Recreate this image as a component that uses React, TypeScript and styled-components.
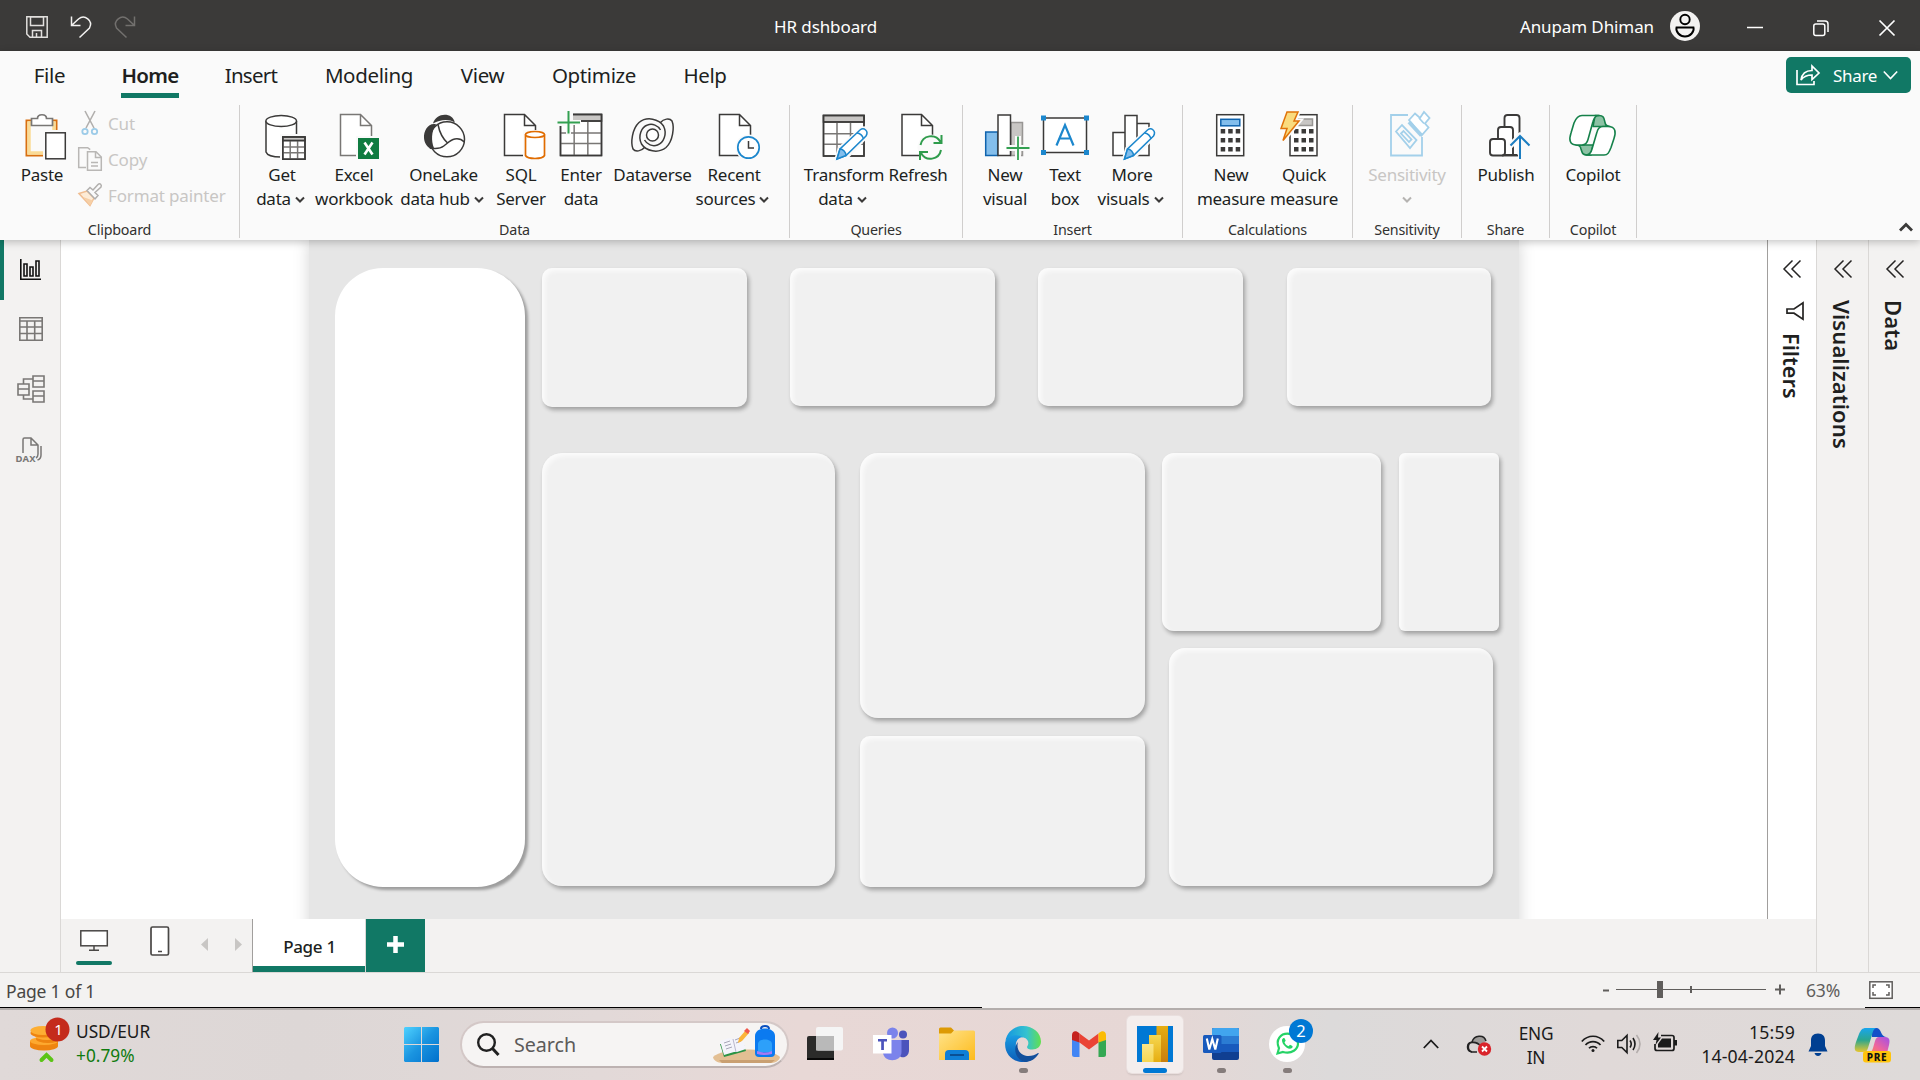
import React from "react";
import styled, { createGlobalStyle } from "styled-components";

const GREEN = "#117865";
const INK = "#3b3a39";

const Global = createGlobalStyle`
  * { box-sizing: border-box; }
  body { margin: 0; background: #f3f2f1; overflow: hidden; }
  svg { display: block; flex: none; overflow: visible; }
`;

const Screen = styled.div`
  width: 1920px; height: 1080px; display: flex; flex-direction: column;
  font-family: "Noto Sans", "Open Sans", sans-serif; color: #201f1e; overflow: hidden;
`;

/* ---------- title bar ---------- */
const TitleBar = styled.header`
  height: 51px; flex: none; background: #3b3a39; color: #fff; display: grid;
  grid-template-columns: 774px 1fr auto; align-items: center; font-size: 17px; letter-spacing: -0.1px;
`;
const QuickTools = styled.div`display: flex; align-items: center; gap: 22px; padding: 3px 0 0 26px;`;
const TitleText = styled.div`padding-top: 1px;`;
const Account = styled.div`display: flex; align-items: center; gap: 16px; padding-top: 1px;`;
const Controls = styled.div`display: flex; gap: 50px; padding: 4px 25px 0 31px;`;

/* ---------- ribbon ---------- */
const Ribbon = styled.div`
  height: 189px; flex: none; background: #fafafa; position: relative; z-index: 2;
  box-shadow: 0 2px 8px rgba(0,0,0,.24);
`;
const TabRow = styled.nav`display: flex; height: 54px; align-items: stretch;`;
const Tab = styled.div<{ $w: number; $on?: boolean; $track?: number }>`
  width: ${p => p.$w}px; display: flex; justify-content: center; font-size: 20.5px; letter-spacing: ${p => p.$track ?? -0.35}px;
  line-height: 49px; font-weight: ${p => (p.$on ? 600 : 400)};
  span { height: 47px; border-bottom: 5px solid ${p => (p.$on ? GREEN : "transparent")}; padding: 0 1px; }
`;
const ShareButton = styled.button`
  margin: 6px 9px 0 auto; width: 125px; height: 36px; border: 0; border-radius: 5px; background: ${GREEN}; color: #fff;
  display: flex; align-items: center; font: inherit; font-size: 17px; letter-spacing: -0.3px; padding: 0 11px 0 10px; gap: 6px;
  span { margin-left: 7px; }
`;
const Groups = styled.div`display: flex; height: 133px; position: relative;`;
const Group = styled.section<{ $w: number; $pad: number }>`
  width: ${p => p.$w}px; border-right: 1px solid #d0cecd; display: flex; flex-direction: column; justify-content: space-between;
  > div { display: flex; padding: 6px 0 0 ${p => p.$pad}px; }
`;
const GroupName = styled.footer`text-align: center; font-size: 14.3px; line-height: 16px; letter-spacing: -0.2px; color: #323130; white-space: nowrap;`;
const BigButton = styled.div<{ $w: number; $off?: boolean }>`
  width: ${p => p.$w}px; display: flex; flex-direction: column; align-items: center; flex: none;
  font-size: 17px; line-height: 24px; letter-spacing: -0.25px; white-space: nowrap; color: ${p => (p.$off ? "#c8c6c4" : "#201f1e")};
  > svg { margin-bottom: 2px; }
`;
const Line = styled.div<{ $menu?: boolean }>`display: flex; align-items: center; gap: 4px; height: 24px; justify-content: center; padding-right: ${p => (p.$menu ? 3 : 0)}px;`;
const SmallList = styled.div`display: flex; flex-direction: column; padding-left: 6px; margin-top: -6px;`;
const SmallItem = styled.div`
  display: flex; align-items: center; gap: 6px; height: 36px; font-size: 17px; letter-spacing: -0.15px; color: #c8c6c4; white-space: nowrap;
`;
const Collapse = styled.div`margin-left: auto; align-self: flex-end; padding: 0 7px 6px 0;`;

/* ---------- work area ---------- */
const Work = styled.main`flex: none; height: 733px; display: flex; background: #f3f2f1; border-bottom: 1px solid #dad8d6;`;
const Rail = styled.aside`width: 61px; border-right: 1px solid #dad8d6; display: flex; flex-direction: column;`;
const RailItem = styled.div<{ $on?: boolean; $dx?: number }>`
  height: 60px; display: flex; align-items: center; justify-content: center; border-left: 4px solid ${p => (p.$on ? GREEN : "transparent")};
  padding: 0 ${p => 4 - (p.$dx ?? 0) * 2}px 2px 0;
`;
const Center = styled.div`width: 1755px; display: flex; flex-direction: column;`;
const View = styled.div`height: 679px; display: flex; background: #fff; overflow: hidden;`;
const Stage = styled.div`flex: 1; padding-left: 248px; overflow: hidden;`;
const Page = styled.div`
  width: 1210px; height: 700px; background: #e6e6e6; box-shadow: 0 0 15px rgba(0,0,0,.17);
  display: flex; gap: 17px; padding: 28px 0 0 26px;
`;
const SidePanel = styled.div`
  width: 190px; height: 619px; border-radius: 48px; background: #fff; box-shadow: 3px 3px 3px rgba(0,0,0,.32);
`;
const Card = styled.div<{ $w: number; $h: number; $r: number; $ml?: number }>`
  width: ${p => p.$w}px; height: ${p => p.$h}px; border-radius: ${p => p.$r}px; margin-left: ${p => p.$ml ?? 0}px; flex: none;
  background: #f1f1f1; box-shadow: 2px 3px 4px rgba(0,0,0,.3), inset 3px 3px 5px rgba(255,255,255,.75);
`;
const Board = styled.div`display: flex; flex-direction: column;`;
const Row = styled.div<{ $gap: number }>`display: flex; gap: ${p => p.$gap}px;`;
const Stack = styled.div<{ $gap: number; $mr?: number }>`display: flex; flex-direction: column; gap: ${p => p.$gap}px; margin-right: ${p => p.$mr ?? 0}px;`;
const Lower = styled.div`display: flex; margin-top: 46px;`;

const Pane = styled.div<{ $w: number; $white?: boolean }>`
  width: ${p => p.$w}px; flex: none; border-left: 1px solid ${p => (p.$white ? "#a19f9d" : "#dad8d6")};
  background: ${p => (p.$white ? "#fff" : "#f3f2f1")}; display: flex; flex-direction: column; align-items: center; padding-top: 20px;
`;
const PaneName = styled.div<{ $size?: number }>`
  writing-mode: vertical-rl; font-size: ${p => p.$size ?? 22}px; font-weight: 600; line-height: 28px; margin: 22px 2px 0 0; letter-spacing: 0.1px;
`;
const FilterMark = styled.div`margin: 24px 0 -9px 5px;`;

const PageBar = styled.div`height: 53px; display: flex; align-items: stretch;`;
const ViewIcons = styled.div`display: flex; width: 191px; padding: 7px 0 0 15px;`;
const ViewIcon = styled.div<{ $on?: boolean; $ml?: number }>`
  width: 36px; height: 39px; margin-left: ${p => p.$ml ?? 0}px; display: flex; flex-direction: column; align-items: center; justify-content: space-between; flex: none;
  &::after { content: ""; display: ${p => (p.$on ? "block" : "none")}; width: 36px; height: 4px; border-radius: 2px; background: ${GREEN}; }
`;
const Arrows = styled.div`display: flex; gap: 27px; padding: 12px 0 0 23px;`;
const PageTab = styled.div`
  width: 114px; background: #fff; border-left: 1px solid #a19f9d; box-shadow: inset 0 -6px ${GREEN};
  text-align: center; font-weight: 500; font-size: 17px; line-height: 55px; letter-spacing: -0.3px; border-right: 1px solid #dad8d6; padding-left: 1px;
`;
const AddTab = styled.div`width: 59px; background: ${GREEN}; display: flex; justify-content: center; padding-top: 17px;`;

/* ---------- status bar ---------- */
const Status = styled.div`height: 34px; flex: none; display: flex; align-items: center; padding: 2px 27px 0 6px; font-size: 17.5px; letter-spacing: -0.2px; color: #484644;`;
const ZoomBox = styled.div`margin-left: auto; display: flex; align-items: center; color: #605e5c;`;
const Percent = styled.span`margin: -3px 29px 0 21px; font-size: 17.5px; letter-spacing: -0.2px;`;
const Edge = styled.div`
  height: 3px; flex: none; background: linear-gradient(90deg, #000 982px, #f3f2f1 982px, #f3f2f1 1865px, #000 1865px) top/100% 1px no-repeat, #b3aeac;
`;

/* ---------- task bar ---------- */
const TaskBar = styled.footer`
  height: 70px; flex: none; display: flex; position: relative; color: #1b1b1b;
  background: linear-gradient(90deg, #e0d9d8 0, #ddd7d6 300px, #e2d9d8 600px, #e8d8d6 800px, #e6d7d5 1150px, #dcdada 1330px, #e0d9d8 1600px, #dedad9 1920px);
`;
const Rates = styled.div`
  width: 404px; display: flex; padding: 9px 0 0 27px; gap: 12px; font-size: 17.3px; line-height: 24px; letter-spacing: 0;
  > div { padding-top: 1px; }
  em { font-style: normal; color: #0f7b0f; display: block; }
`;
const StartButton = styled.div`padding-top: 17px;`;
const Search = styled.div`
  width: 329px; height: 47px; margin: 11px 3px 0 21px; border-radius: 24px; background: #f6f4f3; border: 2px solid #d4c8c7; border-bottom-color: #bdb2b1;
  display: flex; align-items: center; padding-left: 15px; font-size: 19.7px; letter-spacing: -0.05px; color: #5c5a59;
  span { margin: 0 auto 0 15px; }
`;
const Pinned = styled.div`display: flex; width: 528px;`;
const PinnedApp = styled.div<{ $on?: boolean }>`
  width: 66px; height: 57px; padding: 0 5px; margin-top: 6px;
  > div { height: 57px; width: 56px; border-radius: 5px; display: flex; justify-content: center; align-items: center; flex-direction: column; position: relative; padding-bottom: 1px;
    ${p => p.$on && "background:#f4eeed; box-shadow: 0 0 0 1px #e9dfde, 0 2px 2px rgba(0,0,0,.12);"} }
`;
const Running = styled.i<{ $on?: boolean }>`
  position: absolute; bottom: 0; width: ${p => (p.$on ? 24 : 9)}px; height: 5px; border-radius: 3px; background: ${p => (p.$on ? "#0078d4" : "#857c7b")};
`;
const Tray = styled.div`margin-left: auto; display: flex; align-items: flex-start; width: 497px; font-size: 17.3px; line-height: 24px; letter-spacing: -0.1px;`;
const TrayItem = styled.div<{ $w: number; $top: number; $align?: string; $pl?: number }>`width: ${p => p.$w}px; padding: ${p => p.$top}px 0 0 ${p => p.$pl ?? 0}px; text-align: ${p => p.$align ?? "left"}; flex: none; white-space: nowrap;`;
const Lang = styled.div`margin: 0 -3px 0 -5px; letter-spacing: -0.2px;`;
const Clock = styled.div`margin-left: -14px; font-size: 17.7px; letter-spacing: 0.15px;`;

/* ---------- drawings ---------- */
const Ico = ({ children, w = 48, h = 50, box }: { children: React.ReactNode; w?: number; h?: number; box?: string }) => (
  <svg width={w} height={h} viewBox={box ?? `0 0 ${w} ${h}`} fill="none" stroke={INK} strokeWidth="1.5">{children}</svg>
);
const Chevron = ({ c = INK }: { c?: string }) => (
  <Ico w={10} h={8}><path d="M1 2.500l4 4 4-4" stroke={c} strokeWidth="2" /></Ico>
);
const Doc = ({ x, c = INK, w = 31 }: { x: number; c?: string; w?: number }) => (
  <g stroke={c} fill="#fff">
    <path stroke="none" d={`M${x} 3.5h${w - 11}l11 11v30h-${w}z`} />
    <path d={`M${x + w} 27V14.5l-11-11H${x}v41h21M${x + w - 11} 3.5v11h11`} fill="none" />
  </g>
);
const Pencil = ({ x = 0 }: { x?: number }) => (
  <g transform={`translate(${x} 0)`}>
    <path d="M17 48l3-10 21-19c4-3 9 1 6 5L27 45z" stroke="#fafafa" strokeWidth="5" fill="#fafafa" />
    <path d="M17 48l3-10 20-19c4-3 9 1 6 6L26 44.5z" fill="#fff" stroke="#1c87cd" />
    <path d="M17 48l3-10c3 0 6 3 6 6.5z" fill="#83beec" stroke="#1c87cd" />
    <path d="M37 22c3 0 6 3 6.500 6" stroke="#1c87cd" />
  </g>
);
const Grid = ({ x, y, s, head = "#c8c6c4" }: { x: number; y: number; s: number; head?: string }) => (
  <g>
    <rect x={x} y={y} width={s} height={s} fill="#fff" />
    <rect x={x} y={y} width={s} height={s * 0.16} fill={head} />
    <path stroke="#797775" d={`M${x + s / 3} ${y + s * .16}v${s * .84}M${x + s * 2 / 3} ${y + s * .16}v${s * .84}M${x} ${y + s * .45}h${s}M${x} ${y + s * .71}h${s}`} />
    <rect x={x} y={y} width={s} height={s} /><path d={`M${x} ${y + s * .16}h${s}`} />
  </g>
);
const Calc = ({ x }: { x: number }) => (
  <g>
    <rect x={x} y="3.7" width="27" height="41" fill="#fff" stroke={INK} />
    {[18, 27, 36].map(y => [0, 7.5, 15].map(d => <rect key={y + "-" + d} x={x + 4 + d} y={y} width="4.500" height="4.500" fill={INK} stroke="none" />))}
  </g>
);
const Swirl = () => (
  <path d="M15.500 36.500c-3 3.500-9 5-11.500 1.500C1.500 32 3 18 10 11.500 18 5 30 8 34.500 15c4 8 0 17-6 19-5 1.800-10.500-.5-13-5" />
);

const icons: Record<string, React.ReactNode> = {
  paste: <Ico>
    <path d="M8.500 9.500h30v35h-30z" fill="#fff" stroke="#d86f10" strokeWidth="2" />
    <path d="M11 12h25v30H11z" stroke="#fadb96" strokeWidth="3.500" fill="#fafafa" />
    <path d="M13.500 14.500v-7h6c0-5 9-5 9 0h6v7z" fill="#fff" stroke="#797775" strokeWidth="1.700" />
    <path d="M25 19h26v32H25z" fill="#fafafa" stroke="none" /><rect x="27.800" y="21.800" width="19.500" height="26" fill="#fff" />
  </Ico>,
  get: <Ico>
    <path d="M8 10v31c2 3 8 5 16 5V24h14.500V10z" fill="#fff" stroke="none" />
    <path d="M8 10v31c1 3 7 5 15 5M38.500 10v13" /><ellipse cx="23.200" cy="10" rx="15.300" ry="5.500" fill="#fff" />
    <path d="M22 23h28v28H22z" fill="#fafafa" stroke="none" /><Grid x={24.800} y={26} s={22.200} />
  </Ico>,
  excel: <Ico>
    <Doc x={10.500} c="#797775" /><path d="M26 25h24v25H26z" fill="#fafafa" stroke="none" /><path d="M28 27h21v21H28z" fill="#107c41" stroke="none" />
    <path d="M34.500 31.500l8 12M42.500 31.500l-8 12" stroke="#fff" strokeWidth="2.600" />
  </Ico>,
  lake: <Ico>
    <path d="M13 12.500C16 1 33 1 34.800 11.500c-7-4-15-2.500-21.800 1z" fill={INK} stroke="none" />
    <path d="M15.200 13C8 12 3.500 20 4 27c.3 5 3 9 6.500 10.500h5c-3-9-2.500-17 .5-24z" fill={INK} stroke="none" />
    <circle cx="27" cy="28.300" r="17.500" fill="#fff" />
    <path d="M15.500 14.500c-4 6-4.500 15-1.500 22.500l-4 .5C6 31 8 18 15.500 14.500z" fill={INK} stroke="none" />
    <path d="M18 13.500c1.500 8 4.500 14 10 19M9.800 37c5 1 10.500.8 14-2 4-3 6.500-6 11-7 4.500-.800 7 .500 9.500 3" />
  </Ico>,
  sql: <Ico>
    <Doc x={7.500} /><path d="M26 19h24v31H26z" fill="#fafafa" stroke="none" />
    <g stroke="#e06c00" strokeWidth="1.700" fill="#fff"><path d="M28.500 23.500v21c2 4 17 4 19 0v-21" /><ellipse cx="38" cy="23.500" rx="9.500" ry="3" /></g>
  </Ico>,
  enter: <Ico>
    <Grid x={3.500} y={3.500} s={41} /><path d="M0 0h16v15H0z" fill="#fafafa" stroke="none" />
    <path d="M9 9h5v15H9zM9 9h15v5H9z" fill="#fafafa" stroke="none" /><path d="M11.500 0v22.500M.5 11.500H23" stroke="#33a051" strokeWidth="2" />
  </Ico>,
  verse: <Ico>
    <Swirl /><g transform="rotate(180 23.500 24)"><Swirl /></g>
    <circle cx="23.500" cy="24" r="6" fill="#fff" />
  </Ico>,
  recent: <Ico>
    <Doc x={9.500} /><circle cx="38.500" cy="36.500" r="13" fill="#fafafa" stroke="none" /><circle cx="38.500" cy="36.500" r="10.700" fill="#fff" stroke="#1c87cd" strokeWidth="1.700" />
    <path d="M38.500 30v7H44" />
  </Ico>,
  transform: <Ico><Grid x={3.500} y={4.500} s={40.500} /><Pencil /></Ico>,
  refresh: <Ico>
    <Doc x={8} w={30.500} /><circle cx="36.500" cy="36.500" r="13" fill="#fafafa" stroke="none" />
    <path d="M26.500 34c2-10 15-12 20-3M47.500 24v8h-8M47 39c-2 10-15 12-20 3M26 49v-8h8" stroke="#2f9c4c" strokeWidth="2" />
  </Ico>,
  newvis: <Ico>
    <rect x="30" y="11.500" width="11.500" height="33" fill="#c8c6c4" stroke="#979593" />
    <rect x="4.700" y="21" width="12" height="23.500" fill="#83beec" stroke="#0f63ad" />
    <rect x="17" y="4" width="12.500" height="40.500" fill="#fff" />
    <path d="M37 25v24M25 37h24" stroke="#fafafa" strokeWidth="6" /><path d="M37 25.500v23.500M25.500 37h23" stroke="#33a051" strokeWidth="1.800" />
  </Ico>,
  text: <Ico>
    <rect x="2.500" y="7" width="43" height="34.500" fill="#fff" />
    {[[0, 4.500], [43, 4.500], [0, 39], [43, 39]].map(([x, y]) => <rect key={x + "," + y} x={x} y={y} width="5" height="5" fill="#1c87cd" stroke="none" />)}
    <path d="M15.500 34.500L24 14l8.500 20.500M18.500 27.500h11" stroke="#1c87cd" strokeWidth="2.200" />
  </Ico>,
  morevis: <Ico><g fill="#fff"><path d="M29 12.500h12v32H29zM5 21.500h12v23H5zM17 4.500h12v40H17z" /></g><Pencil x={-.5} /></Ico>,
  calc: <Ico><Calc x={9.700} /><rect x="13.800" y="8.300" width="19" height="6.500" fill="#83beec" stroke="#0f63ad" /></Ico>,
  quick: <Ico>
    <Calc x={10} /><rect x="14" y="8" width="18.500" height="6.500" fill="#c8c6c4" stroke="#979593" />
    <path d="M7 1h11l-4 9h5L3 29.500l4-12H1z" stroke="#fafafa" strokeWidth="5" fill="#fafafa" />
    <path d="M7 1h11l-4 9h5L3 29.500l4-12H1z" fill="#fadb7e" stroke="#e0730a" />
  </Ico>,
  sens: <Ico>
    <g stroke="#a3d0ea" strokeWidth="1.800">
      <path d="M25 4H8v40.500h31V26" />
      <path d="M13 20.500l6-6.500 14.500 15-6.500 8z" fill="#fafafa" /><path d="M18 22.500l2.500-2.500 8 8.500-2.500 2.500z" />
      <path d="M26 9l6-6.500 5 4.500 4-6 5.500 6-4.500 5.500 3.500 4-7 8z" fill="#fff" />
      <path d="M26 11l12.500 13.500" strokeWidth="4" /><path d="M36 7l5 5.500" />
    </g>
  </Ico>,
  publish: <Ico>
    <g fill="#fff" strokeWidth="1.900"><path d="M22.500 44V7q0-3 3-3h9q3 0 3 3v37z" /><path d="M16 44V19q0-3 3-3h9q3 0 3 3v25z" /><rect x="8" y="28" width="15" height="16.500" rx="3" /></g>
    <path d="M38 22v28M28 35l10-10 10 10" stroke="#fafafa" strokeWidth="6" /><path d="M20 44.500h16" strokeWidth="1.900" />
    <path d="M38 24.500V48M28.500 34.500l9.500-9.500 9.500 9.500" stroke="#1c7dc0" strokeWidth="2" />
  </Ico>,
  copilot: <Ico>
    <g stroke="#15814a" strokeWidth="1.600" strokeLinejoin="round">
      <path d="M26 4.500h4c5 0 5 3 6 7 .5 3 2 4 5 4H24z" fill="#8cc2a4" /><path d="M22 44h-4c-5 0-5-3-6-6-.5-3-2-4-5-4h17z" fill="#8cc2a4" />
      <path d="M13 4.500h17c-3 0-5 2-6 6l-5 18c-1 4-3 5.500-6 5.500H8c-8 0-8-6-6-12l3-10c2-5 4-7.500 8-7.500z" fill="#fff" />
      <path d="M35 44H17c3 0 5-2 6-6l5-17c1-4 3-5.500 6-5.500h5c8 0 8 6 6 12l-3 9c-2 5-3 7.500-7 7.500z" fill="#fff" />
    </g>
  </Ico>,
};

type Btn = { w: number; icon: string; a: string; b?: string; menu?: boolean; off?: boolean };
const groups: { name: string; w: number; pad: number; items: Btn[] }[] = [
  { name: "Data", w: 550, pad: 12, items: [
    { w: 60, icon: "get", a: "Get", b: "data", menu: true }, { w: 84, icon: "excel", a: "Excel", b: "workbook" },
    { w: 95, icon: "lake", a: "OneLake", b: "data hub", menu: true }, { w: 60, icon: "sql", a: "SQL", b: "Server" },
    { w: 60, icon: "enter", a: "Enter", b: "data" }, { w: 83, icon: "verse", a: "Dataverse" }, { w: 80, icon: "recent", a: "Recent", b: "sources", menu: true }] },
  { name: "Queries", w: 173, pad: 10, items: [{ w: 88, icon: "transform", a: "Transform", b: "data", menu: true }, { w: 60, icon: "refresh", a: "Refresh" }] },
  { name: "Insert", w: 220, pad: 12, items: [{ w: 60, icon: "newvis", a: "New", b: "visual" }, { w: 60, icon: "text", a: "Text", b: "box" }, { w: 74, icon: "morevis", a: "More", b: "visuals", menu: true }] },
  { name: "Calculations", w: 170, pad: 11, items: [{ w: 74, icon: "calc", a: "New", b: "measure" }, { w: 72, icon: "quick", a: "Quick", b: "measure" }] },
  { name: "Sensitivity", w: 109, pad: 4, items: [{ w: 100, icon: "sens", a: "Sensitivity", b: "", menu: true, off: true }] },
  { name: "Share", w: 88, pad: 5, items: [{ w: 78, icon: "publish", a: "Publish" }] },
  { name: "Copilot", w: 87, pad: 4, items: [{ w: 78, icon: "copilot", a: "Copilot" }] },
];

const Big = ({ w, icon, a, b, menu, off }: Btn) => (
  <BigButton $w={w} $off={off}>
    {icons[icon]}
    <Line>{a}</Line>
    {(b || menu) && <Line $menu={menu && !off}>{b}{menu && <Chevron c={off ? "#b5b3b1" : INK} />}</Line>}
  </BigButton>
);

const Expand = () => <Ico w={18} h={18}><path d="M9.500.5L1 9l8.500 8.500M17.500.5L9 9l8.500 8.500" stroke="#252423" /></Ico>;

const tabs: [string, number, number?][] = [["File", 99], ["Home", 102, -0.75], ["Insert", 100, -0.7], ["Modeling", 136], ["View", 91], ["Optimize", 132], ["Help", 90]];

const taskIcons: { icon: React.ReactNode; run?: boolean; on?: boolean }[] = [
  { icon: <Ico w={36} h={36}><g stroke="none"><rect x="0" y="10" width="27" height="24" rx="2" fill="#2b2b2a" /><path d="M0 32h27v2H0z" fill="#080808" /><rect x="9" y="1" width="27" height="23.500" rx="2" fill="#f5f5f5" /><path d="M9 10h18v14.500H9z" fill="#b9b9b9" /></g></Ico> },
  { icon: <Ico w={36} h={36}><g stroke="none"><circle cx="30" cy="8.500" r="4" fill="#4b53bc" /><path d="M24 14h12v10c0 8-8 9-10 5z" fill="#4b53bc" /><circle cx="19.500" cy="7" r="5.500" fill="#7b83eb" /><path d="M10 14h18.500v12c0 11-18.500 11-18.500 0z" fill="#7b83eb" /><path d="M0 9h18.500v18.500H0z" fill="#fff" /><path d="M5 13h9v2.500h-3.100V24H8.200v-8.500H5z" fill="#4b53bc" /></g></Ico> },
  { icon: <Ico w={36} h={36}><g stroke="none"><path d="M0 3q0-1.500 1.500-1.500H12l3 3-2 4H0z" fill="#dd9a04" /><path d="M0 7.500h12l3-3h19.500q1.500 0 1.500 1.500v28H0z" fill="url(#fold)" /><path d="M6 34v-6q0-4 4-4h16q4 0 4 4v6z" fill="#0f7fd6" /><path d="M11 29h14" stroke="#0a4f93" strokeWidth="2" /></g><defs><linearGradient id="fold" x1="0" y1="0" x2="1" y2="1"><stop stopColor="#ffe38a" /><stop offset="1" stopColor="#fdbb1c" /></linearGradient></defs></Ico> },
  { run: true, icon: <Ico w={36} h={36}><defs><linearGradient id="e1"><stop stopColor="#1496e0" /><stop offset=".6" stopColor="#35c2d0" /><stop offset="1" stopColor="#62e04e" /></linearGradient><linearGradient id="e2" x1="0" y1="0" x2="0" y2="1"><stop stopColor="#1b9de2" /><stop offset="1" stopColor="#0b5cb8" /></linearGradient></defs><g stroke="none">
    <path d="M.4 15C2 6 9 0 18 0c10 0 18 7 18 15.500 0 5-4 8-8.500 8-4 0-6.500-1.500-5-3.500 2-3 .500-7.500-4-8.500C12 10 4 11 .4 15z" fill="url(#e1)" />
    <path d="M.2 16C3 9 12 7.500 18 11.300 12 11 9 18 12 24c3 7 11 10 21 4-3 5-9 8-15 8C7 36-1 27 .2 16z" fill="url(#e2)" />
    <path d="M13 16c-2 7 2 13 9 14 4 .5 8-1 11-3 .5 0 1 .3.500 1-4 6-9 8-14 8-9-3-12-13-6.500-20z" fill="#124f9c" /></g></Ico> },
  { icon: <Ico w={34} h={26}><g stroke="none"><path d="M0 5l7.500 5.500V26H2.500Q0 26 0 23.500z" fill="#4285f4" /><path d="M34 5l-7.500 5.500V26h5Q34 26 34 23.500z" fill="#34a853" /><path d="M7.500 2.500l9.500 7 9.500-7v9L17 18.500l-9.500-7z" fill="#ea4335" /><path d="M0 9V4c0-4 4-5 7-2l.5.500v9z" fill="#c5221f" /><path d="M34 9V4c0-4-4-5-7-2l-.5.500v9z" fill="#fbbc04" /></g></Ico> },
  { on: true, run: true, icon: <Ico w={36} h={36}><defs><linearGradient id="p1" x1="0" y1="0" x2="0" y2="1"><stop stopColor="#e6ad10" /><stop offset="1" stopColor="#c87e0e" /></linearGradient><linearGradient id="p2" x1="0" y1="0" x2="0" y2="1"><stop stopColor="#f6d751" /><stop offset="1" stopColor="#e6ad10" /></linearGradient><linearGradient id="p3" x1="0" y1="0" x2="0" y2="1"><stop stopColor="#f9e589" /><stop offset="1" stopColor="#f6d751" /></linearGradient></defs><g stroke="none"><path d="M0 0h36v36H0z" fill="#0078d4" /><path d="M19.500 0H31v36H19.500z" fill="url(#p1)" /><path d="M12 9h12v27H12z" fill="url(#p2)" /><path d="M5 18h11.500v18H5z" fill="url(#p3)" /></g></Ico> },
  { run: true, icon: <Ico w={36} h={36}><g stroke="none"><rect x="9" y="2" width="27" height="32" rx="2" fill="#103f91" /><path d="M9 26V4q0-2 2-2h23q2 0 2 2v22z" fill="#185abd" /><path d="M9 18V4q0-2 2-2h23q2 0 2 2v14z" fill="#2b7cd3" /><path d="M9 10V4q0-2 2-2h23q2 0 2 2v6z" fill="#41a5ee" /><rect x="0" y="9" width="18.500" height="18" rx="1.500" fill="#185abd" /></g><path d="M3.800 12.500l2.500 11 3-10.500 3 10.500 2.500-11" stroke="#fff" strokeWidth="2.100" /></Ico> },
  { run: true, icon: <Ico w={36} h={36}><circle cx="18" cy="18" r="18" fill="#fff" stroke="none" /><path d="M8.500 27.500l1.500-5.300c-4-9 2-14.500 8.500-14.500S29 12 29 17.500 23 28.500 14 26z" stroke="#25d366" strokeWidth="2.200" /><path d="M14.500 12c-2 .8-2 3.500 0 6.500s6 5.500 8.500 3.500c1-1 .8-1.800 0-2.300l-2-.9-1.500 1.500c-2-.8-3.300-2.200-4-4l1.200-1.500-.9-2.300q-.3-.7-1.300-.5z" fill="#25d366" stroke="none" /><circle cx="32" cy="5" r="12" fill="#0078d4" stroke="none" /><text x="32" y="11" textAnchor="middle" fontSize="16.500" fill="#fff" stroke="none">2</text></Ico> },
];

export default function App() {
  return (
    <Screen>
      <Global />
      <TitleBar>
        <QuickTools>
          <Ico w={22} h={22}><g stroke="#e1dfdd" strokeWidth="1.500"><path d="M.8.8h20.400v20.400H4L.8 18z" /><path d="M4.500.8h13v8.700h-13zM6.500 21v-6.500h9V21M10.500 21v-4" /></g></Ico>
          <Ico w={22} h={22}><path d="M1.500.5v9h9M1.500 9.500l7-6.500c6-5 15 1.500 11 9L9.500 21.500" stroke="#f3f2f1" /></Ico>
          <Ico w={22} h={22}><path d="M20.500.5v9h-9M20.500 9.500l-7-6.500C7.500-2-1.500 4.500 2.500 12l10 9.500" stroke="#72706e" /></Ico>
        </QuickTools>
        <TitleText>HR dshboard</TitleText>
        <Account>
          Anupam Dhiman
          <Ico w={30} h={30}><circle cx="15" cy="15" r="15" fill="#f3f2f1" stroke="none" /><g stroke="#000" strokeWidth="1.900"><circle cx="15" cy="8.500" r="4.700" /><path d="M6.500 16.500h17c1 4-3 9-8.500 9s-9.500-5-8.500-9z" /></g></Ico>
          <Controls>
            <Ico w={16} h={16}><path d="M0 7.500h16" stroke="#fff" /></Ico>
            <Ico w={16} h={16}><g stroke="#fff"><rect x=".8" y="4" width="11" height="11.500" rx="2" /><path d="M4 1h8q3 0 3 3v8" /></g></Ico>
            <Ico w={16} h={16}><path d="M.5.500l15 15M15.500.500l-15 15" stroke="#fff" strokeWidth="1.700" /></Ico>
          </Controls>
        </Account>
      </TitleBar>

      <Ribbon>
        <TabRow>
          {tabs.map(([t, w, track]) => <Tab key={t} $w={w} $track={track} $on={t === "Home"}><span>{t}</span></Tab>)}
          <ShareButton>
            <Ico w={24} h={22}><path d="M1 6v14.500h17V17M5 16c1-7 5-9.500 11-9.500V2l7 7-7 6.500V11c-5 0-8 1-11 5z" stroke="#fff" strokeWidth="1.700" /></Ico>
            <span>Share</span>
            <Ico w={15} h={10}><path d="M.8 1.500l6.700 7 6.700-7" stroke="#fff" strokeWidth="1.600" /></Ico>
          </ShareButton>
        </TabRow>
        <Groups>
          <Group $w={240} $pad={12}>
            <div>
              <Big w={60} icon="paste" a="Paste" />
              <SmallList>
                <SmallItem><Ico w={24} h={24}><path d="M7 0l9 17M17 0L8 17" stroke="#b1afad" strokeWidth="1.600" /><g stroke="#9ccbe8" strokeWidth="1.800"><circle cx="7" cy="20.500" r="2.700" /><circle cx="16.500" cy="20.500" r="2.700" /></g></Ico>Cut</SmallItem>
                <SmallItem><Ico w={24} h={24}><g stroke="#b9b7b5"><path d="M8 20.500H.7V.700h9l2.500 2" /><path d="M9.500 4.700h8.500l5.300 5.300v13.300H9.500zM17.500 5v5.500H23M13 15.500h7M13 19h7" fill="#fafafa" /></g></Ico>Copy</SmallItem>
                <SmallItem><Ico w={24} h={24}><path d="M1 10.500l8-2.500 7 7-4 7.500z" fill="#fdebd6" stroke="#f0bd91" /><path d="M5 14l7 8.500 3-5z" fill="#f6cfa6" stroke="none" /><path d="M9 7.500l3-3 3 2.500 5-5.500c2-2 4 .500 3 2.500l-6 5.500 3 3-3 3.500z" fill="#fafafa" stroke="#b1afad" /></Ico>Format painter</SmallItem>
              </SmallList>
            </div>
            <GroupName>Clipboard</GroupName>
          </Group>
          {groups.map(g => (
            <Group key={g.name} $w={g.w} $pad={g.pad}>
              <div>{g.items.map(b => <Big key={b.icon} {...b} />)}</div>
              <GroupName>{g.name}</GroupName>
            </Group>
          ))}
          <Collapse><Ico w={14} h={10}><path d="M1 8.500l6-6 6 6" strokeWidth="2.800" /></Ico></Collapse>
        </Groups>
      </Ribbon>

      <Work>
        <Rail>
          <RailItem $on><Ico w={21} h={21}><g stroke="#111" strokeWidth="1.600"><path d="M.8 0v20.200H21" /><path d="M4 5h3v12H4zM10 8h3v9h-3zM16 2h3v15h-3z" /></g></Ico></RailItem>
          <RailItem $dx={1}><Ico w={24} h={24}><g stroke="#797775" strokeWidth="1.600"><path d="M.8.800h22.400v22.400H.8zM1 4h22M1 10h22M1 16.500h22M8 4v19M15.700 4v19" /></g></Ico></RailItem>
          <RailItem $dx={1}><Ico w={28} h={28}><g stroke="#797775" strokeWidth="1.600"><path d="M1 9h11v11H1zM1 14h11M16 1h11v11H16zM16 6h11M16 16h11v11H16zM16 21h11M6.500 9V4H16M6.500 20v4H16" /></g></Ico></RailItem>
          <RailItem $dx={-1}><Ico w={26} h={25}><g stroke="#797775"><path d="M7 16V2.500Q7 1 8.500 1H15l7 7v9q0 3-2 4M15 1v7h7M25 9v9q0 4-3.500 5" /></g><text x="-.5" y="24.500" fontSize="9.500" fontWeight="700" fill="#797775" stroke="none" textLength="20">DAX</text></Ico></RailItem>
        </Rail>
        <Center>
          <View>
            <Stage>
              <Page>
                <SidePanel />
                <Board>
                  <Row $gap={43.500}>
                    <Card $w={204.700} $h={139} $r={10} /><Card $w={204.700} $h={138} $r={10} /><Card $w={204.700} $h={138} $r={10} /><Card $w={204.700} $h={138} $r={10} />
                  </Row>
                  <Lower>
                    <Stack $gap={0} $mr={25}><Card $w={293} $h={433} $r={20} /></Stack>
                    <Stack $gap={18} $mr={17}><Card $w={285} $h={265} $r={18} /><Card $w={285} $h={151} $r={10} /></Stack>
                    <Stack $gap={17}>
                      <Row $gap={18}><Card $w={219} $h={178} $r={12} /><Card $w={100} $h={178} $r={6} /></Row>
                      <Card $w={324} $h={238} $r={16} $ml={7} />
                    </Stack>
                  </Lower>
                </Board>
              </Page>
            </Stage>
            <Pane $w={49} $white>
              <Expand />
              <FilterMark><Ico w={18} h={18}><path d="M17 .800v16.400l-9-6H1V7h7z" stroke="#252423" strokeWidth="1.700" /></Ico></FilterMark>
              <PaneName $size={21.500}>Filters</PaneName>
            </Pane>
          </View>
          <PageBar>
            <ViewIcons>
              <ViewIcon $on><Ico w={28} h={22} box="0 -4 28 22"><g stroke="#494745"><rect x=".8" y=".8" width="26.500" height="15" fill="#fff" /><path d="M14 16v4M9 20.200h10" /></g></Ico></ViewIcon>
              <ViewIcon $ml={30}><Ico w={20} h={30}><rect x="1" y="1" width="17.500" height="28" rx="1.500" stroke="#494745" strokeWidth="1.700" fill="#fff" /><path d="M8 25.500h4" stroke="#494745" /></Ico></ViewIcon>
              <Arrows>
                <Ico w={7} h={13}><path d="M7 0v13L0 6.500z" fill="#c8c6c4" stroke="none" /></Ico>
                <Ico w={7} h={13}><path d="M0 0v13l7-6.500z" fill="#c8c6c4" stroke="none" /></Ico>
              </Arrows>
            </ViewIcons>
            <PageTab>Page 1</PageTab>
            <AddTab><Ico w={17} h={17}><path d="M8.500 0v17M0 8.500h17" stroke="#fff" strokeWidth="4.500" /></Ico></AddTab>
          </PageBar>
        </Center>
        <Pane $w={52}><Expand /><PaneName>Visualizations</PaneName></Pane>
        <Pane $w={52}><Expand /><PaneName>Data</PaneName></Pane>
      </Work>

      <Status>
        Page 1 of 1
        <ZoomBox>
          <Ico w={182} h={20}><g stroke="#605e5c"><path d="M0 9.500h6M172 8.500h10M177 3.500v10" strokeWidth="2" /><path d="M13 8.500h150" strokeWidth="1" /><path d="M57 0v17" strokeWidth="6" /><path d="M88 5v7" strokeWidth="2" /></g></Ico>
          <Percent>63%</Percent>
          <Ico w={24} h={20}><g stroke="#605e5c"><rect x=".8" y=".8" width="22.400" height="16.500" fill="#fff" /><path d="M4 7V4h3M17 4h3v3M20 11v3h-3M7 14H4v-3" /></g></Ico>
        </ZoomBox>
      </Status>
      <Edge />

      <TaskBar>
        <Rates>
          <Ico w={37} h={50}>
            <g stroke="none"><ellipse cx="17" cy="27" rx="14" ry="4.500" fill="#ee8410" /><path d="M3 22h28v5H3z" fill="#f0860f" /><ellipse cx="17" cy="22" rx="14" ry="4" fill="#fda92f" /><ellipse cx="21" cy="20" rx="12" ry="4" fill="#ee8410" /><ellipse cx="20" cy="17" rx="12" ry="4" fill="#fda92f" /><ellipse cx="16" cy="14" rx="12.500" ry="4.500" fill="#ee8410" /><ellipse cx="16" cy="11.500" rx="12.500" ry="4.500" fill="#fdae33" /><circle cx="30.500" cy="10.500" r="12" fill="#c42b1c" /><text x="31.500" y="16" fontSize="15" fill="#fff" textAnchor="middle">1</text></g>
            <path d="M14.500 41l5-5 5 5" stroke="#5cc417" strokeWidth="4" strokeLinecap="round" />
          </Ico>
          <div>USD/EUR<em>+0.79%</em></div>
        </Rates>
        <StartButton>
          <Ico w={35} h={35}><defs><linearGradient id="win" gradientUnits="userSpaceOnUse" x1="0" y1="0" x2="35" y2="35"><stop stopColor="#4fd2ff" /><stop offset=".5" stopColor="#1a94e0" /><stop offset="1" stopColor="#0070cc" /></linearGradient></defs>
            <path d="M1 0h16v17H0V1zM18 0h16l1 1v16H18zM0 18h17v17H1l-1-1zM18 18h17v16l-1 1H18z" fill="url(#win)" stroke="none" /></Ico>
        </StartButton>
        <Search>
          <Ico w={22} h={23}><circle cx="9.500" cy="9.500" r="8.300" stroke="#202020" strokeWidth="2.400" /><path d="M15.500 15.500l6 6.500" stroke="#202020" strokeWidth="3" /></Ico>
          <span>Search</span>
          <Ico w={74} h={38}>
            <g stroke="none"><path d="M0 31c10-10 56-10 67 0 0 3-5 6-8 6H9c-4 0-9-3-9-6z" fill="#e3bf93" /><path d="M6 34h56l-4 3H9z" fill="#c9a072" />
              <path d="M7 18l4 13 22-6-2-6z" fill="#2b9345" /><path d="M7 15l9-3 4 1 8-4 5 14-9 3-3 0-10 3z" fill="#f4f4fb" /><path d="M11 17l6-2M12 20l6-2M13 23l6-2M22 14l5-2M23 17l5-2" stroke="#a7a6b8" strokeWidth="1" /><path d="M20 13l3 13" stroke="#b9b7cc" strokeWidth="1" />
              <path d="M25 17l1-5 7-8 3 3-7 8z" fill="#fbb43a" /><path d="M31 5l3-3 3 3-2 3z" fill="#f0584c" />
              <path d="M42 10c0-10 20-10 20 0v17q0 4-4 4H46q-4 0-4-4z" fill="#0b7af0" /><path d="M48 3c0-4 8-4 8 0" stroke="#0b50c0" strokeWidth="2" /><path d="M45 18c0-6 14-6 14 0v8H45z" fill="#2da0fa" /><path d="M44 25q8 3 15 0v3q-8 2-15 0z" fill="#a77af2" /></g>
          </Ico>
        </Search>
        <Pinned>
          {taskIcons.map((t, i) => <PinnedApp key={i} $on={t.on}><div>{t.icon}{t.run && <Running $on={t.on} />}</div></PinnedApp>)}
        </Pinned>
        <Tray>
          <TrayItem $w={44} $top={29}><Ico w={16} h={10}><path d="M.8 9L8 1.500 15.200 9" stroke="#1b1b1b" strokeWidth="1.800" /></Ico></TrayItem>
          <TrayItem $w={49} $top={24}><Ico w={25} h={22}><path d="M5 18c-6-1-6-9 0-10C7 1 17 0 19 7" fill="#9d9a98" stroke="#222" /><path d="M10 18H5c-5-1-5-9 0-9.500 5-.500 7 1.500 9 4" fill="#d9d4d3" stroke="#222" strokeWidth="1.700" /><circle cx="17.500" cy="15" r="6.700" fill="#d9242b" stroke="none" /><path d="M15 12.500l5 5M20 12.500l-5 5" stroke="#fff" strokeWidth="1.800" /></Ico></TrayItem>
          <TrayItem $w={42} $top={12} $align="center"><Lang>ENG<br />IN</Lang></TrayItem>
          <TrayItem $w={58} $top={25} $pl={23}><Ico w={24} h={18}><g stroke="#1b1b1b" strokeWidth="1.700"><path d="M.8 6.500C7-.500 17-.500 23.200 6.500M4.500 10c4-4.500 11-4.500 15 0M8 13.300c2-2.300 6-2.300 8 0" /><circle cx="12" cy="15.500" r="1.500" fill="#1b1b1b" stroke="none" /></g></Ico></TrayItem>
          <TrayItem $w={36} $top={24} $pl={1}><Ico w={25} h={20}><g stroke="#1b1b1b" strokeWidth="1.600"><path d="M.8 6.500h4L10 1.500v17l-5.200-5H.8z" /><path d="M13 6.500q2.500 3.500 0 7M16 4q4 6 0 12" /><path d="M19.500 1q7 9 0 18" stroke="#b3adac" /></g></Ico></TrayItem>
          <TrayItem $w={34} $top={22} $pl={1}><Ico w={25} h={20}><g stroke="#1b1b1b" strokeWidth="1.700"><path d="M8 3.500h11q2 0 2 2v11q0 2-2 2H4q-2 0-2-2V12" /><path d="M22.500 8v5.500" strokeWidth="3" /><path d="M9 6.500h9v9H5V12z" fill="#1b1b1b" stroke="none" /><path d="M5.500 0L0 8h3.500l-1 5L8 5.500H5z" fill="#1b1b1b" stroke="none" /></g></Ico></TrayItem>
          <TrayItem $w={109} $top={10} $align="right"><Clock>15:59<br />14-04-2024</Clock></TrayItem>
          <TrayItem $w={60} $top={23} $pl={13}><Ico w={20} h={24}><path d="M10 .500c-5 0-7 3-7 7V13L.500 18.500h19L17 13V7.500c0-4-2-7-7-7zM6.500 20h7c-1 4-6 4-7 0z" fill="#003f91" stroke="none" /></Ico></TrayItem>
          <TrayItem $w={50} $top={18}><Ico w={36} h={35}>
            <defs><linearGradient id="c1" x1="0" y1="0" x2="0" y2="1"><stop stopColor="#18a5ee" /><stop offset=".5" stopColor="#2ba68f" /><stop offset="1" stopColor="#e8c62e" /></linearGradient><linearGradient id="c2" x1="1" y1="0" x2="0" y2="1"><stop stopColor="#a14fe8" /><stop offset=".6" stopColor="#f0659b" /><stop offset="1" stopColor="#fb8b4a" /></linearGradient></defs>
            <g stroke="none"><path d="M17 0h5c4 0 4 9 9 9h-14z" fill="#1450c8" /><path d="M11 0h11c-3 0-4 3-5 7l-4 13c-1 3-2 4-5 4H4c-5 0-5-4-3-10l3-8c2-4 3-6 7-6z" fill="url(#c1)" /><path d="M24 9h6c5 0 5 4 4 8l-2 8H13c3 0 4-2 5-5l2-7c1-3 2-4 4-4z" fill="url(#c2)" /><rect x="8" y="23" width="28" height="11.500" rx="3" fill="#ffc40c" /><text x="22" y="32.500" fontSize="10" fontWeight="800" fill="#111" textAnchor="middle" letterSpacing=".6">PRE</text></g>
          </Ico></TrayItem>
        </Tray>
      </TaskBar>
    </Screen>
  );
}
